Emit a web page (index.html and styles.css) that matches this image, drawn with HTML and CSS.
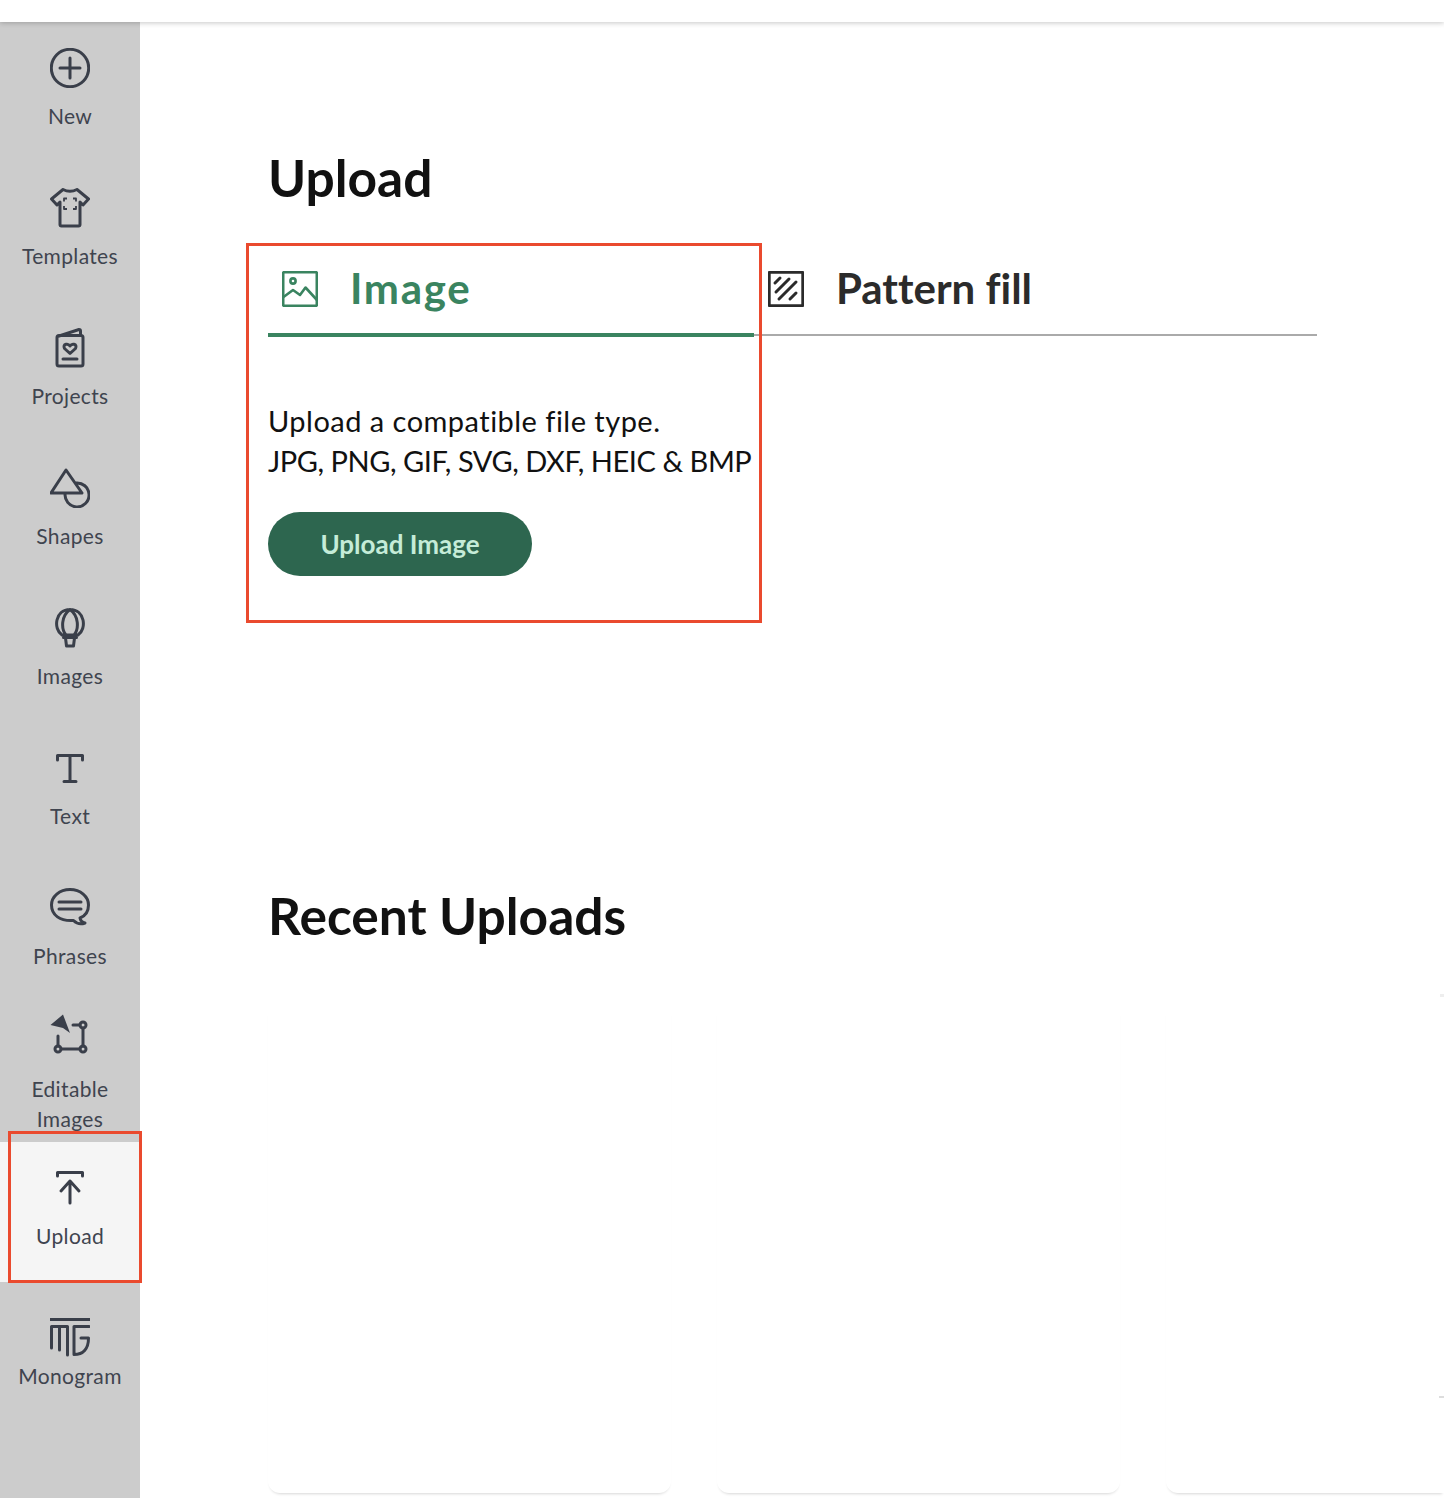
FILE: index.html
```html
<!DOCTYPE html>
<html lang="en">
<head>
<meta charset="utf-8">
<title>Upload</title>
<link rel="stylesheet" href="styles.css">
</head>
<body>
<header class="topbar"></header>
<div class="layout">
  <nav class="sidebar">
    <a class="nav-item"><svg class="nav-icon" viewBox="0 0 40 40"><circle cx="20" cy="20" r="18.7"/><path d="M10 20H30M20 10V30"/></svg><span class="nav-label">New</span></a>
    <a class="nav-item"><svg class="nav-icon" viewBox="0 0 40 40"><path d="M13 1.500Q20 5 27 1.500L38.500 11 33 17 30 14V36.500Q30 38 28.500 38H11.500Q10 38 10 36.500V14L7 17 1.500 11Z"/><path class="thin" d="M14 13.500V10.500H17M23 10.500H26V13.500M14 18V21H17M23 21H26V18"/></svg><span class="nav-label">Templates</span></a>
    <a class="nav-item"><svg class="nav-icon" viewBox="0 0 40 40"><path d="M7 9.500Q7 7.500 9 7.500H31Q33 7.500 33 9.500V36Q33 38 31 38H9Q7 38 7 36ZM7.500 8.500 29 1.500Q30.500 1.500 30.500 3V7.500"/><path d="M20 25.500 14.500 20.500Q13 17 16 16.300 18.500 15.700 20 18 21.500 15.700 24 16.300 27 17 25.500 20.500ZM13 31H27"/></svg><span class="nav-label">Projects</span></a>
    <a class="nav-item"><svg class="nav-icon" viewBox="0 0 40 40"><path d="M16 2 32 25H1ZM25.500 15A12 12 0 1 1 15.200 25"/></svg><span class="nav-label">Shapes</span></a>
    <a class="nav-item"><svg class="nav-icon" viewBox="0 0 40 40"><path d="M12 27C3 21 5 1.500 20 1.500S37 21 28 27ZM20 1.500C11 8 11 21 16 27M20 1.500C29 8 29 21 24 27M13.500 29.500H26.500M15.500 30 16.500 38H23.500L24.500 30"/></svg><span class="nav-label">Images</span></a>
    <a class="nav-item"><svg class="nav-icon" viewBox="0 0 40 40"><path d="M7.500 12V7.500H32.500V12M20 7.500V33.500M14 33.500H26"/></svg><span class="nav-label">Text</span></a>
    <a class="nav-item"><svg class="nav-icon" viewBox="0 0 40 40"><path d="M20 1.500C30.500 1.500 38.500 8.500 38.500 17 38.500 23.500 35 28 30 30 30.500 32.500 32.500 34.500 35 35 31 36.500 26.500 35.500 23.500 32.500 10 33.500 1.500 27 1.500 17 1.500 8.500 9.500 1.500 20 1.500Z"/><path d="M9 14H31M9 21H31"/></svg><span class="nav-label">Phrases</span></a>
    <a class="nav-item nav-item-tall"><svg class="nav-icon" viewBox="0 0 40 40"><path class="solid" d="M.5 11 13 .5 20 19 13 14Z"/><circle cx="33" cy="11" r="3"/><circle cx="8" cy="35" r="3"/><circle cx="33" cy="35" r="3"/><path d="M33 14V32M11 35H30M8 22V32M23 11H30"/></svg><span class="nav-label">Editable Images</span></a>
    <a class="nav-item nav-item-active"><svg class="nav-icon" viewBox="0 0 40 40"><path d="M7.500 8V4.500H32.500V8M20 13V35M11 23 20 13 29 23"/></svg><span class="nav-label">Upload</span></a>
    <a class="nav-item nav-item-close"><svg class="nav-icon" viewBox="0 0 40 40"><path d="M0 2.500H40M1.500 31V9.500H17.500V38M9.500 9.500V33M24 9.500V37.500C33 37.500 38.500 32 38.500 21H31M24 9.500H39"/></svg><span class="nav-label">Monogram</span></a>
  </nav>
  <main class="main">
    <h1 class="heading">Upload</h1>
    <div class="tabs">
      <div class="tab tab-active">
        <svg class="tab-icon" viewBox="0 0 36 36"><rect x="1.200" y="1.200" width="33.600" height="33.600" rx="1"/><circle cx="11" cy="10" r="2.600"/><path d="M1.500 26 11 19 18 24 23.500 16.500 34.500 28.500"/></svg>
        <span class="tab-label tab-label-wide">Image</span>
      </div>
      <div class="tab tab-rest">
        <svg class="tab-icon tab-icon-bold" viewBox="0 0 36 36"><rect x="1.200" y="1.200" width="33.600" height="33.600" rx="1"/><path d="M7 12 12 7M8 21 21 8M11 28 28 11M22 28 28 22"/></svg>
        <span class="tab-label">Pattern fill</span>
      </div>
    </div>
    <p class="intro"><span class="intro-line intro-line-wide">Upload a compatible file type.</span><span class="intro-line intro-line-tight">JPG, PNG, GIF, SVG, DXF, HEIC &amp; BMP</span></p>
    <button class="upload-button" type="button">Upload Image</button>
    <h2 class="heading heading-recent">Recent Uploads</h2>
    <div class="cards">
      <div class="card"></div>
      <div class="card"></div>
      <div class="card"></div>
    </div>
  </main>
</div>
<div class="callout callout-panel"></div>
<div class="callout callout-nav"></div>
<div class="edge-mark edge-mark-upper"></div>
<div class="edge-mark edge-mark-lower"></div>
</body>
</html>
```

FILE: styles.css
```css
* { box-sizing: border-box; }
html, body { margin: 0; height: 1498px; overflow: hidden; background: #fff; }
body { font-family: "Lato", "Liberation Sans", sans-serif; font-variant-ligatures: none; color: #111; display: flex; flex-direction: column; position: relative; }

.topbar { height: 22px; flex: none; background: #fff; box-shadow: 0 1px 5px rgba(0,0,0,.22); position: relative; z-index: 2; }
.layout { flex: 1; display: flex; min-height: 0; }

.sidebar { width: 140px; flex: none; background: #ccc; display: flex; flex-direction: column; }
.nav-item { height: 140px; flex: none; display: flex; flex-direction: column; align-items: center; padding-top: 26px; gap: 13px; }
.nav-item-tall { padding-top: 12px; gap: 20px; }
.nav-item-active { background: #f5f5f5; }
.nav-item-close { padding-top: 35px; gap: 4px; }
.nav-icon { width: 40px; height: 40px; flex: none; fill: none; stroke: #3a3f4a; stroke-width: 3; stroke-linecap: round; stroke-linejoin: round; }
.nav-icon .thin { stroke-width: 1.8; stroke-linecap: butt; }
.nav-icon .solid { fill: #3a3f4a; stroke: none; }
.nav-label { font-size: 21px; line-height: 30px; letter-spacing: .35px; color: #3f444f; text-align: center; width: 104px; }

.main { flex: 1; min-width: 0; padding-left: 128px; display: flex; flex-direction: column; }
.heading { margin: 0; font-size: 51.5px; line-height: 60px; font-weight: 700; color: #111; padding-left: 0; }
.main > .heading:first-child { margin-top: 125px; }
.heading-recent { margin-top: 309px; }

.tabs { display: flex; width: 1049px; margin-top: 36px; height: 94px; flex: none; }
.tab { display: flex; align-items: center; height: 100%; padding: 2px 0 0 14px; gap: 32px; }
.tab-active { width: 486px; color: #3a8460; border-bottom: 4px solid #3a8460; }
.tab-rest { flex: 1; color: #2b2b2b; border-bottom: 2px solid #aaa; height: calc(100% - 1px); padding-top: 1px; }
.tab-icon { width: 36px; height: 36px; flex: none; fill: none; stroke: currentColor; stroke-width: 2.6; stroke-linecap: round; stroke-linejoin: round; }
.tab-icon-bold { stroke-width: 3; }
.tab-label { font-size: 42px; font-weight: 700; line-height: 50px; margin-top: -2px; }
.tab-label-wide { letter-spacing: 1.7px; }

.intro { margin: 64px 0 0; font-size: 29px; line-height: 40px; color: #111; white-space: nowrap; }
.intro-line { display: block; }
.intro-line-wide { letter-spacing: .47px; }
.intro-line-tight { letter-spacing: -.45px; }
.upload-button { margin-top: 31px; width: 264px; height: 64px; flex: none; border: 0; border-radius: 32px; background: #2d664f; color: #c5ecd8; font: 700 26px "Lato", "Liberation Sans", sans-serif; padding: 0; }

.cards { display: flex; gap: 46px; margin-top: 58px; height: 490px; flex: none; }
.card { flex: 0 0 403px; height: 490px; background: #fff; border-radius: 12px; box-shadow: 0 3px 3px -2px rgba(0,0,0,.16); }
.card:last-child { flex: 1 1 0; min-width: 0; border-radius: 12px 0 0 12px; }

.callout { position: absolute; border: 3px solid #ea4a2e; z-index: 3; }
.callout-panel { left: 246px; top: 243px; width: 516px; height: 380px; }
.callout-nav { left: 8px; top: 1131px; width: 134px; height: 152px; }
.edge-mark { position: absolute; right: 0; background: #eee; z-index: 1; }
.edge-mark-upper { top: 994px; width: 4px; height: 3px; }
.edge-mark-lower { top: 1396px; width: 5px; height: 2px; background: #ddd; }
```
